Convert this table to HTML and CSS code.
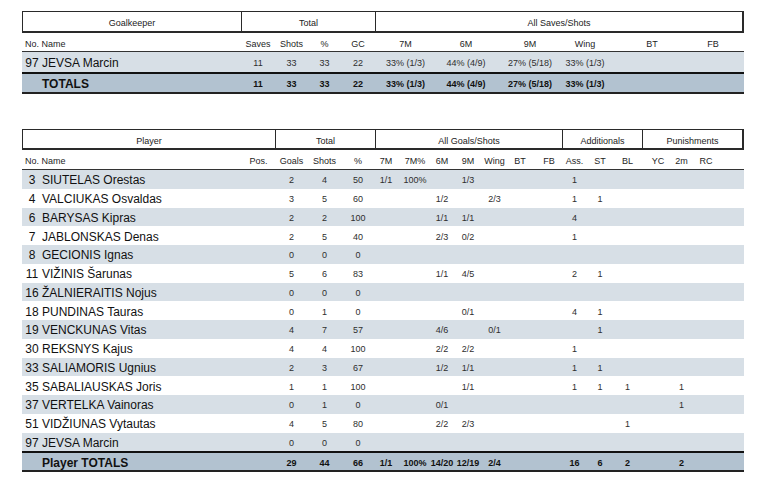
FILE: index.html
```html
<!DOCTYPE html>
<html lang="en">
<head>
<meta charset="utf-8">
<title>Match statistics</title>
<link rel="stylesheet" href="styles.css">
</head>
<body>
<div class="page">
  <section class="sheet">
    <div class="groups groups-gk">
      <div>Goalkeeper</div><div>Total</div><div>All Saves/Shots</div>
    </div>
    <div class="row head head-gk cols-gk">
      <span class="l label">No. Name</span>
      <span>Saves</span><span>Shots</span><span>%</span><span>GC</span>
      <span>7M</span><span>6M</span><span>9M</span><span>Wing</span><span>BT</span><span>FB</span><span></span>
    </div>
    <div class="row data data-gk shade cols-gk">
      <span class="no">97</span><span class="l nm">JEVSA Marcin</span>
      <span>11</span><span>33</span><span>33</span><span>22</span>
      <span>33% (1/3)</span><span>44% (4/9)</span><span>27% (5/18)</span><span>33% (1/3)</span><span></span><span></span><span></span>
    </div>
    <div class="row total total-gk cols-gk">
      <span></span><span class="l nm">TOTALS</span>
      <span>11</span><span>33</span><span>33</span><span>22</span>
      <span>33% (1/3)</span><span>44% (4/9)</span><span>27% (5/18)</span><span>33% (1/3)</span><span></span><span></span><span></span>
    </div>
  </section>

  <section class="sheet">
    <div class="groups groups-pl">
      <div>Player</div><div>Total</div><div>All Goals/Shots</div><div>Additionals</div><div>Punishments</div>
    </div>
    <div class="row head head-pl cols-pl">
      <span class="l label">No. Name</span><span>Pos.</span>
      <span>Goals</span><span>Shots</span><span>%</span>
      <span>7M</span><span>7M%</span><span>6M</span><span>9M</span><span>Wing</span><span>BT</span><span>FB</span>
      <span>Ass.</span><span>ST</span><span>BL</span>
      <span>YC</span><span>2m</span><span>RC</span><span></span>
    </div>

    <div class="row data data-pl shade cols-pl">
      <span class="no">3</span><span class="l nm">SIUTELAS Orestas</span><span></span>
      <span>2</span><span>4</span><span>50</span>
      <span>1/1</span><span>100%</span><span></span><span>1/3</span><span></span><span></span><span></span>
      <span>1</span><span></span><span></span>
      <span></span><span></span><span></span><span></span>
    </div>
    <div class="row data data-pl cols-pl">
      <span class="no">4</span><span class="l nm">VALCIUKAS Osvaldas</span><span></span>
      <span>3</span><span>5</span><span>60</span>
      <span></span><span></span><span>1/2</span><span></span><span>2/3</span><span></span><span></span>
      <span>1</span><span>1</span><span></span>
      <span></span><span></span><span></span><span></span>
    </div>
    <div class="row data data-pl shade cols-pl">
      <span class="no">6</span><span class="l nm">BARYSAS Kipras</span><span></span>
      <span>2</span><span>2</span><span>100</span>
      <span></span><span></span><span>1/1</span><span>1/1</span><span></span><span></span><span></span>
      <span>4</span><span></span><span></span>
      <span></span><span></span><span></span><span></span>
    </div>
    <div class="row data data-pl cols-pl">
      <span class="no">7</span><span class="l nm">JABLONSKAS Denas</span><span></span>
      <span>2</span><span>5</span><span>40</span>
      <span></span><span></span><span>2/3</span><span>0/2</span><span></span><span></span><span></span>
      <span>1</span><span></span><span></span>
      <span></span><span></span><span></span><span></span>
    </div>
    <div class="row data data-pl shade cols-pl">
      <span class="no">8</span><span class="l nm">GECIONIS Ignas</span><span></span>
      <span>0</span><span>0</span><span>0</span>
      <span></span><span></span><span></span><span></span><span></span><span></span><span></span>
      <span></span><span></span><span></span>
      <span></span><span></span><span></span><span></span>
    </div>
    <div class="row data data-pl cols-pl">
      <span class="no">11</span><span class="l nm">VIŽINIS Šarunas</span><span></span>
      <span>5</span><span>6</span><span>83</span>
      <span></span><span></span><span>1/1</span><span>4/5</span><span></span><span></span><span></span>
      <span>2</span><span>1</span><span></span>
      <span></span><span></span><span></span><span></span>
    </div>
    <div class="row data data-pl shade cols-pl">
      <span class="no">16</span><span class="l nm">ŽALNIERAITIS Nojus</span><span></span>
      <span>0</span><span>0</span><span>0</span>
      <span></span><span></span><span></span><span></span><span></span><span></span><span></span>
      <span></span><span></span><span></span>
      <span></span><span></span><span></span><span></span>
    </div>
    <div class="row data data-pl cols-pl">
      <span class="no">18</span><span class="l nm">PUNDINAS Tauras</span><span></span>
      <span>0</span><span>1</span><span>0</span>
      <span></span><span></span><span></span><span>0/1</span><span></span><span></span><span></span>
      <span>4</span><span>1</span><span></span>
      <span></span><span></span><span></span><span></span>
    </div>
    <div class="row data data-pl shade cols-pl">
      <span class="no">19</span><span class="l nm">VENCKUNAS Vitas</span><span></span>
      <span>4</span><span>7</span><span>57</span>
      <span></span><span></span><span>4/6</span><span></span><span>0/1</span><span></span><span></span>
      <span></span><span>1</span><span></span>
      <span></span><span></span><span></span><span></span>
    </div>
    <div class="row data data-pl cols-pl">
      <span class="no">30</span><span class="l nm">REKSNYS Kajus</span><span></span>
      <span>4</span><span>4</span><span>100</span>
      <span></span><span></span><span>2/2</span><span>2/2</span><span></span><span></span><span></span>
      <span>1</span><span></span><span></span>
      <span></span><span></span><span></span><span></span>
    </div>
    <div class="row data data-pl shade cols-pl">
      <span class="no">33</span><span class="l nm">SALIAMORIS Ugnius</span><span></span>
      <span>2</span><span>3</span><span>67</span>
      <span></span><span></span><span>1/2</span><span>1/1</span><span></span><span></span><span></span>
      <span>1</span><span>1</span><span></span>
      <span></span><span></span><span></span><span></span>
    </div>
    <div class="row data data-pl cols-pl">
      <span class="no">35</span><span class="l nm">SABALIAUSKAS Joris</span><span></span>
      <span>1</span><span>1</span><span>100</span>
      <span></span><span></span><span></span><span>1/1</span><span></span><span></span><span></span>
      <span>1</span><span>1</span><span>1</span>
      <span></span><span>1</span><span></span><span></span>
    </div>
    <div class="row data data-pl shade cols-pl">
      <span class="no">37</span><span class="l nm">VERTELKA Vainoras</span><span></span>
      <span>0</span><span>1</span><span>0</span>
      <span></span><span></span><span>0/1</span><span></span><span></span><span></span><span></span>
      <span></span><span></span><span></span>
      <span></span><span>1</span><span></span><span></span>
    </div>
    <div class="row data data-pl cols-pl">
      <span class="no">51</span><span class="l nm">VIDŽIUNAS Vytautas</span><span></span>
      <span>4</span><span>5</span><span>80</span>
      <span></span><span></span><span>2/2</span><span>2/3</span><span></span><span></span><span></span>
      <span></span><span></span><span>1</span>
      <span></span><span></span><span></span><span></span>
    </div>
    <div class="row data data-pl shade cols-pl">
      <span class="no">97</span><span class="l nm">JEVSA Marcin</span><span></span>
      <span>0</span><span>0</span><span>0</span>
      <span></span><span></span><span></span><span></span><span></span><span></span><span></span>
      <span></span><span></span><span></span>
      <span></span><span></span><span></span><span></span>
    </div>

    <div class="row total total-pl cols-pl">
      <span></span><span class="l nm">Player TOTALS</span><span></span>
      <span>29</span><span>44</span><span>66</span>
      <span>1/1</span><span>100%</span><span>14/20</span><span>12/19</span><span>2/4</span><span></span><span></span>
      <span>16</span><span>6</span><span>2</span>
      <span></span><span>2</span><span></span><span></span>
    </div>
  </section>
</div>
</body>
</html>
```

FILE: styles.css
```css
* {
  box-sizing: border-box;
}

body {
  margin: 0;
  background: #ffffff;
  color: #151515;
  font-family: "Liberation Sans", Arial, sans-serif;
}

.page {
  width: 764px;
  padding: 11px 20px 0 22px;
}

.sheet {
  width: 722px;
}

.sheet + .sheet {
  margin-top: 35px;
}

/* group header box */
.groups {
  display: grid;
  border: 1px solid #2a2a2a;
  border-right-width: 2px;
  border-bottom-width: 2px;
  font-size: 9px;
  color: #222;
}

.groups > div {
  display: flex;
  align-items: center;
  justify-content: center;
  padding-top: 3px;
}

.groups > div + div {
  border-left: 1px solid #2a2a2a;
}

.groups-gk {
  height: 22px;
  grid-template-columns: 218px 134px 1fr;
}

.groups-pl {
  height: 21px;
  grid-template-columns: 252px 100px 187px 80px 1fr;
}

/* rows */
.row {
  display: grid;
  align-items: center;
}

.row > span {
  display: flex;
  justify-content: center;
  white-space: nowrap;
}

.row > .l {
  justify-content: flex-start;
}

.cols-gk {
  grid-template-columns: 20px 199px 34px 33px 33px 34px 61px 60px 68px 42px 92px 30px 1fr;
}

.cols-pl {
  grid-template-columns: 20px 200px 33px 33px 33px 34px 22px 36px 18px 34px 19px 32px 26px 25px 26px 29px 32px 15px 34px 1fr;
}

.head {
  font-size: 9px;
  color: #1e1e1e;
  border-bottom: 1px solid #333;
  padding-top: 3px;
}

.head .label {
  grid-column: span 2;
  padding-left: 3px;
}

.head-gk {
  height: 19px;
}

.head-pl {
  height: 20px;
}

.data {
  font-size: 9px;
  color: #2e2e2e;
}

.data .no,
.data .nm {
  font-size: 12px;
  color: #111;
}

.data-gk {
  height: 20px;
  padding-top: 1px;
}

.data-pl {
  height: 18.75px;
  padding-top: 2px;
}

.shade {
  background: #d7dfe6;
}

.total {
  background: #b2c2d0;
  border-top: 2px solid #111;
  border-bottom: 2px solid #222;
  font-size: 9px;
  font-weight: bold;
  color: #111;
  padding-top: 2px;
}

.total .nm {
  font-size: 12px;
}

.total-gk {
  height: 22px;
}

.total-pl {
  height: 21px;
}
```
